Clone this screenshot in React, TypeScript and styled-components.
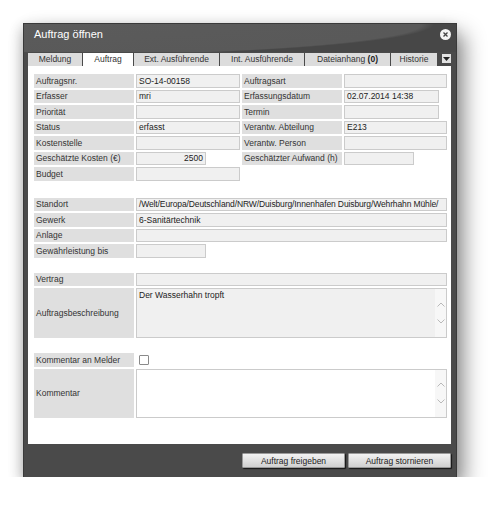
import * as React from 'react';
import styled, { createGlobalStyle } from 'styled-components';

const GlobalStyle = createGlobalStyle`
    body {
        margin: 0;
        background: #ffffff;
        font-family: "Liberation Sans", Arial, sans-serif;
        font-size: 8.5px;
        color: #333333;
    }
`;

const tabs = [
    { label: 'Meldung', width: 54 },
    { label: 'Auftrag', width: 50, active: true },
    { label: 'Ext. Ausführende', width: 85 },
    { label: 'Int. Ausführende', width: 84 },
    { label: 'Dateianhang', count: '(0)', width: 85 },
    { label: 'Historie', width: 46 },
];

const leftRows = [
    { label: 'Auftragsnr.', value: 'SO-14-00158' },
    { label: 'Erfasser', value: 'mri' },
    { label: 'Priorität', value: '' },
    { label: 'Status', value: 'erfasst' },
    { label: 'Kostenstelle', value: '' },
    { label: 'Geschätzte Kosten (€)', value: '2500', width: 70, right: true },
    { label: 'Budget', value: '' },
];

const rightRows = [
    { label: 'Auftragsart', value: '' },
    { label: 'Erfassungsdatum', value: '02.07.2014 14:38', width: 95 },
    { label: 'Termin', value: '', width: 95 },
    { label: 'Verantw. Abteilung', value: 'E213' },
    { label: 'Verantw. Person', value: '' },
    { label: 'Geschätzter Aufwand (h)', value: '', width: 70 },
];

const ScrollArrows = () => (
    <ScrollStrip>
        <svg width="8" height="5" viewBox="0 0 8 5">
            <path d="M0.5 4.5 L4 1 L7.5 4.5" fill="none" stroke="#b9b9b9" strokeWidth="1" />
        </svg>
        <svg width="8" height="5" viewBox="0 0 8 5">
            <path d="M0.5 0.5 L4 4 L7.5 0.5" fill="none" stroke="#b9b9b9" strokeWidth="1" />
        </svg>
    </ScrollStrip>
);

const App = () => {
    return (
        <Page>
            <GlobalStyle />
            <Dialog>
                <TitleBar>
                    <Title>Auftrag öffnen</Title>
                    <CloseButton>
                        <svg width="5" height="5" viewBox="0 0 5 5">
                            <path d="M0.5 0.5 L4.5 4.5 M4.5 0.5 L0.5 4.5" stroke="#444" strokeWidth="1.3" />
                        </svg>
                    </CloseButton>
                </TitleBar>
                <TabBar>
                    {tabs.map((t) => (
                        <Tab key={t.label} $width={t.width} $active={!!t.active}>
                            {t.label}
                            {t.count ? <b> {t.count}</b> : null}
                        </Tab>
                    ))}
                    <TabMenu>
                        <svg width="7" height="4" viewBox="0 0 7 4">
                            <path d="M0 0 L7 0 L3.5 4 Z" fill="#222" />
                        </svg>
                    </TabMenu>
                </TabBar>
                <Content>
                    <TopGrid>
                        <Column>
                            {leftRows.map((r) => (
                                <Row key={r.label}>
                                    <Label>{r.label}</Label>
                                    <Value $width={r.width} $right={!!r.right}>
                                        {r.value}
                                    </Value>
                                </Row>
                            ))}
                        </Column>
                        <Column>
                            {rightRows.map((r) => (
                                <Row key={r.label}>
                                    <Label>{r.label}</Label>
                                    <Value $width={r.width}>{r.value}</Value>
                                </Row>
                            ))}
                        </Column>
                    </TopGrid>

                    <Section $top={17}>
                        <Row>
                            <Label>Standort</Label>
                            <Value $tight>/Welt/Europa/Deutschland/NRW/Duisburg/Innenhafen Duisburg/Wehrhahn Mühle/</Value>
                        </Row>
                        <Row>
                            <Label>Gewerk</Label>
                            <Value>6-Sanitärtechnik</Value>
                        </Row>
                        <Row>
                            <Label>Anlage</Label>
                            <Value />
                        </Row>
                        <Row>
                            <Label>Gewährleistung bis</Label>
                            <Value $width={70} />
                        </Row>
                    </Section>

                    <Section $top={15}>
                        <Row>
                            <Label>Vertrag</Label>
                            <Value />
                        </Row>
                        <Row $height={50}>
                            <Label>Auftragsbeschreibung</Label>
                            <TextBox>
                                <TextBody>Der Wasserhahn tropft</TextBody>
                                <ScrollArrows />
                            </TextBox>
                        </Row>
                    </Section>

                    <Section $top={15}>
                        <Row>
                            <Label>Kommentar an Melder</Label>
                            <CheckCell>
                                <Checkbox />
                            </CheckCell>
                        </Row>
                        <Row $height={49}>
                            <Label>Kommentar</Label>
                            <TextBox $white>
                                <TextBody />
                                <ScrollArrows />
                            </TextBox>
                        </Row>
                    </Section>
                </Content>
                <Footer>
                    <FooterButton>Auftrag freigeben</FooterButton>
                    <FooterButton>Auftrag stornieren</FooterButton>
                </Footer>
            </Dialog>
        </Page>
    );
};

const Page = styled.div`
    padding: 24px 0 0 24px;
`;

const Dialog = styled.div`
    width: 432px;
    height: 453px;
    display: flex;
    flex-direction: column;
    background: #4a4a4a;
    box-shadow: 0 0 0 1px #3a3a3a, 8px 10px 20px rgba(0, 0, 0, 0.45), -3px 3px 12px rgba(0, 0, 0, 0.2);
`;

const TitleBar = styled.div`
    height: 28px;
    box-sizing: border-box;
    flex: none;
    display: flex;
    align-items: flex-start;
    justify-content: space-between;
    padding: 4px 5px 0 10px;
    background: radial-gradient(ellipse 410px 32px at 0px 0px, #5b5b5b 0, #595959 97%, #474747 100%);
`;

const Title = styled.div`
    color: #ffffff;
    font-size: 11px;
    line-height: 13px;
`;

const CloseButton = styled.div`
    width: 11px;
    height: 11px;
    border-radius: 50%;
    background: #f4f4f4;
    display: flex;
    align-items: center;
    justify-content: center;
    margin-top: 0.5px;
`;

const TabBar = styled.div`
    height: 14px;
    flex: none;
    display: flex;
    align-items: flex-end;
    gap: 1px;
    padding: 0 5px 0 4px;
`;

const Tab = styled.div<{ $width: number; $active: boolean }>`
    width: ${(p) => p.$width}px;
    height: 13px;
    line-height: 13px;
    text-align: center;
    white-space: nowrap;
    background: ${(p) => (p.$active ? '#ffffff' : '#dcdcdc')};
    color: #333333;
    b {
        color: #222;
    }
`;

const TabMenu = styled.div`
    margin-left: auto;
    align-self: flex-start;
    margin-top: 2px;
    width: 9px;
    height: 9px;
    background: #e2e2e2;
    display: flex;
    align-items: center;
    justify-content: center;
`;

const Content = styled.div`
    flex: 1;
    background: #ffffff;
    margin: 0 5px 0 4px;
    padding: 8px 4px 0 6px;
`;

const TopGrid = styled.div`
    display: grid;
    grid-template-columns: 206px 1fr;
    column-gap: 2px;
`;

const Column = styled.div`
    display: flex;
    flex-direction: column;
    gap: 2px;
`;

const Section = styled.div<{ $top: number }>`
    margin-top: ${(p) => p.$top}px;
    display: flex;
    flex-direction: column;
    gap: 2px;
`;

const Row = styled.div<{ $height?: number }>`
    display: grid;
    grid-template-columns: 100px 1fr;
    column-gap: 2px;
    height: ${(p) => p.$height || 13.5}px;
`;

const Label = styled.div`
    background: #dfdfdf;
    padding-left: 2px;
    display: flex;
    align-items: center;
    white-space: nowrap;
    color: #333333;
`;

const Value = styled.div<{ $width?: number; $right?: boolean; $tight?: boolean }>`
    box-sizing: border-box;
    width: ${(p) => (p.$width ? `${p.$width}px` : 'auto')};
    background: #f0f0f0;
    border: 1px solid #cbcbcb;
    padding: 0 2px;
    display: flex;
    align-items: center;
    justify-content: ${(p) => (p.$right ? 'flex-end' : 'flex-start')};
    white-space: nowrap;
    overflow: hidden;
    letter-spacing: ${(p) => (p.$tight ? '-0.12px' : 'normal')};
    color: #222222;
`;

const TextBox = styled.div<{ $white?: boolean }>`
    box-sizing: border-box;
    display: flex;
    background: ${(p) => (p.$white ? '#ffffff' : '#f0f0f0')};
    border: 1px solid #cbcbcb;
`;

const TextBody = styled.div`
    flex: 1;
    padding: 1px 2px;
    color: #222222;
`;

const ScrollStrip = styled.div`
    width: 11px;
    background: #f7f7f7;
    display: flex;
    flex-direction: column;
    align-items: center;
    justify-content: center;
    gap: 12px;
`;

const CheckCell = styled.div`
    display: flex;
    align-items: center;
    padding-left: 3px;
`;

const Checkbox = styled.div`
    width: 8px;
    height: 8px;
    border: 1px solid #8a8a8a;
    border-radius: 1px;
    background: #ffffff;
`;

const Footer = styled.div`
    height: 33px;
    flex: none;
    display: flex;
    justify-content: flex-end;
    align-items: center;
    gap: 3px;
    padding-right: 5px;
`;

const FooterButton = styled.div`
    box-sizing: border-box;
    width: 103px;
    height: 15px;
    display: flex;
    align-items: center;
    justify-content: center;
    background: linear-gradient(#f3f3f3, #d0d0d0);
    border: 1px solid #9a9a9a;
    border-radius: 1px;
    box-shadow: 1px 1px 1px rgba(0, 0, 0, 0.7);
    color: #222222;
    font-size: 8.5px;
`;

export default App;
